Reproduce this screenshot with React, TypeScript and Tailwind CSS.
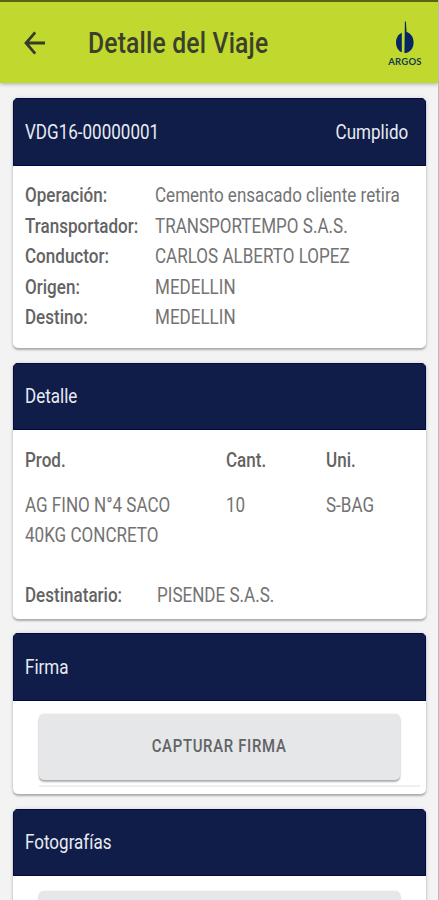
import type { ReactNode } from "react";
import clsx from "clsx";

const trip = [
  { label: "Operación:", value: "Cemento ensacado cliente retira" },
  { label: "Transportador:", value: "TRANSPORTEMPO S.A.S." },
  { label: "Conductor:", value: "CARLOS ALBERTO LOPEZ" },
  { label: "Origen:", value: "MEDELLIN" },
  { label: "Destino:", value: "MEDELLIN" },
];

// Roboto condensed horizontally
function Narrow({ children, className }: { children: ReactNode; className?: string }) {
  return (
    <span className={clsx("inline-block whitespace-nowrap scale-x-[0.852]", className ?? "origin-left")}>
      {children}
    </span>
  );
}

function BackIcon() {
  return (
    <svg width="22" height="24" viewBox="0 0 22 24" fill="none" aria-hidden="true">
      <path d="M21 12H2M11.2 1.4L2 12L11.2 22.6" stroke="#363b2a" strokeWidth="2.8" />
    </svg>
  );
}

function ArgosLogo() {
  return (
    <div className="flex w-9 flex-col items-center pt-[3px]">
      <svg width="20" height="34" viewBox="0 0 20 34" fill="#082663" aria-hidden="true">
        <path d="M6.8 11.7C3.4 13.2 1 16.9 1 21.4C1 26.1 3.4 29.9 6.8 31.2Z" />
        <path d="M9.4 32L9.9 0.5H10.9L11.6 11.1C15.8 12.3 18.6 16.2 18.6 21.4C18.6 27.3 14.8 32 9.4 32Z" />
      </svg>
      <span className="mt-0.5 whitespace-nowrap font-[Lato,sans-serif] text-[9.5px] leading-[10px] font-bold tracking-[0.2px] text-[#173b4b]">
        ARGOS
      </span>
    </div>
  );
}

function Card({ title, status, className, children }: {
  title: string;
  status?: string;
  className?: string;
  children: ReactNode;
}) {
  return (
    <section className={clsx("shrink-0 overflow-hidden rounded-[5px] bg-white shadow-[0_2px_2px_rgba(0,0,0,0.25),0_0_4px_rgba(0,0,0,0.13)]", className)}>
      <header className="flex h-[67.5px] items-center justify-between border border-[#060943] bg-[#101d49] pr-[17px] pl-[11px] text-[#e9ebf2]">
        <Narrow>{title}</Narrow>
        {status && <Narrow className="origin-right">{status}</Narrow>}
      </header>
      {children}
    </section>
  );
}

function ActionButton({ children }: { children?: ReactNode }) {
  return (
    <button className="flex h-[66px] w-[361px] items-center justify-center rounded-[5px] bg-[#e6e7e8] text-[17.5px] font-medium tracking-[0.8px] text-[#626365] shadow-[0_2px_2px_rgba(0,0,0,0.3),0_0_2px_rgba(0,0,0,0.12)]">
      {children && <Narrow className="origin-center">{children}</Narrow>}
    </button>
  );
}

export default function App() {
  return (
    <div className="flex h-[900px] w-[439px] flex-col overflow-hidden border-r border-[#b8b8b8] bg-[#f3f3f3] font-[Roboto,sans-serif] text-[20px] leading-[30.5px] text-[#737373]">
      <div className="z-10 flex h-[83px] shrink-0 items-center border-t-2 border-[#596512] bg-[#c1d82f] pr-[15px] pl-6 shadow-[0_1px_4px_rgba(0,0,0,0.3)]">
        <BackIcon />
        <h1 className="mt-0.5 ml-[42px] flex-1 text-[29px] font-medium tracking-[0.2px] text-[#3b402c]">
          <Narrow>Detalle del Viaje</Narrow>
        </h1>
        <ArgosLogo />
      </div>

      <main className="flex flex-col gap-[14.5px] pt-[15px] pr-3 pl-[13px]">
        <Card title="VDG16-00000001" status="Cumplido" className="h-[250px]">
          <dl className="grid grid-cols-[130px_1fr] pt-[14.5px] pl-3">
            {trip.map(({ label, value }) => (
              <div key={label} className="contents">
                <dt className="h-[30.5px] font-medium text-[#636363]"><Narrow>{label}</Narrow></dt>
                <dd className="h-[30.5px]"><Narrow>{value}</Narrow></dd>
              </div>
            ))}
          </dl>
        </Card>

        <Card title="Detalle" className="h-[256px]">
          <div className="pt-[14.5px] pl-3">
            <div className="grid grid-cols-[201px_100px_1fr] font-medium text-[#636363]">
              <Narrow>Prod.</Narrow>
              <Narrow>Cant.</Narrow>
              <Narrow>Uni.</Narrow>
            </div>
            <div className="mt-[14.5px] grid grid-cols-[201px_100px_1fr] items-start">
              <Narrow>AG FINO N°4 SACO<br />40KG CONCRETO</Narrow>
              <Narrow>10</Narrow>
              <Narrow>S-BAG</Narrow>
            </div>
            <div className="mt-[29.5px] grid grid-cols-[132px_1fr]">
              <Narrow className="origin-left font-medium text-[#636363]">Destinatario:</Narrow>
              <Narrow>PISENDE S.A.S.</Narrow>
            </div>
          </div>
        </Card>

        <Card title="Firma" className="h-[161px]">
          <div className="pt-[13px] pr-1.5 pl-[26px]">
            <ActionButton>CAPTURAR FIRMA</ActionButton>
            <hr className="mt-[5px] border-t-2 border-[#efefef]" />
          </div>
        </Card>

        <Card title="Fotografías" className="h-[161px]">
          <div className="pt-[15px] pr-1.5 pl-[26px]">
            <ActionButton />
          </div>
        </Card>
      </main>
    </div>
  );
}
